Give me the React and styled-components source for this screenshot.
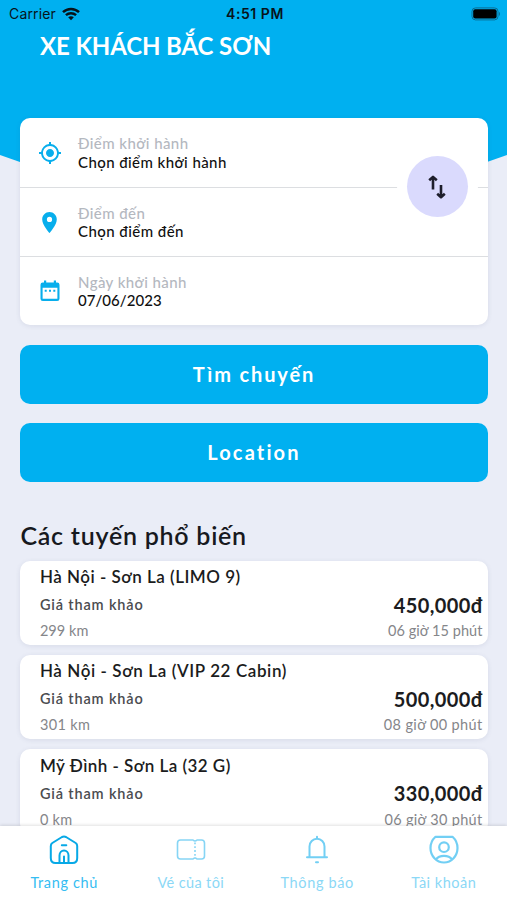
import React from "react";
import styled, { createGlobalStyle } from "styled-components";
import { MdLocationOn, MdMyLocation } from "react-icons/md";

const ROUTES = [
  {
    id: 1,
    name: "Hà Nội - Sơn La (LIMO 9)",
    price: "450,000đ",
    distance: "299 km",
    duration: "06 giờ 15 phút",
    spacing: 0.5,
    detailSpacing: 0.05,
  },
  {
    id: 2,
    name: "Hà Nội - Sơn La (VIP 22 Cabin)",
    price: "500,000đ",
    distance: "301 km",
    duration: "08 giờ 00 phút",
    spacing: 0.6,
    detailSpacing: 0.35,
  },
  {
    id: 3,
    name: "Mỹ Đình - Sơn La (32 G)",
    price: "330,000đ",
    distance: "0 km",
    duration: "06 giờ 30 phút",
    spacing: 0.47,
    detailSpacing: 0.3,
  },
];

const WifiIcon = () => (
  <svg width="18" height="14" viewBox="0 0 18 14" fill="none" stroke="#07141b">
    <path d="M1 5.2C5.5.9 12.5.9 17 5.2" strokeWidth="2.5" />
    <path d="M3.9 8.2C6.8 5.5 11.2 5.5 14.1 8.2" strokeWidth="2.4" />
    <path d="M6.2 10.3C7.8 8.9 10.2 8.9 11.8 10.3L9 13.2Z" fill="#07141b" stroke="none" />
  </svg>
);

const BatteryIcon = () => (
  <svg width="30" height="14" viewBox="0 0 30 14">
    <rect x="1" y="0.9" width="26" height="12" rx="3.5" fill="none" stroke="#0a6d94" />
    <rect x="2.2" y="2.2" width="23.4" height="9.4" rx="2" fill="#000" />
    <path d="M28 4.8Q30 7 28 9.2Z" fill="#0a6d94" />
  </svg>
);

const CalendarIcon = () => (
  <svg width="20" height="22" viewBox="0 0 20 22">
    <path
      fill="#08aeec"
      fillRule="evenodd"
      d="M4 .5h2.2v2h7.6v-2H16v2h1.2Q19.500 2.500 19.500 4.800v14Q19.500 21 17.200 21H2.800Q.5 21 .5 18.800v-14Q.5 2.500 2.800 2.500H4ZM2.600 7.800v11h14.800v-11Z"
    />
    <path fill="#08aeec" d="M4.700 9.800h2v2h-2ZM9 9.800h2v2H9ZM13.300 9.800h2v2h-2Z" />
  </svg>
);

const SwapIcon = () => (
  <svg width="18" height="24" viewBox="0 0 18 24" fill="none" stroke="#1d1d2b" strokeWidth="2.6" strokeLinejoin="round">
    <path d="M5 14.5V3M1.2 5.3L5 1.9L8.8 5.3" />
    <path d="M13 10v11M9.2 18.8L13 22.2L16.8 18.8" />
  </svg>
);

const HomeIcon = () => (
  <svg width="30" height="30" viewBox="0 0 30 30" fill="none" stroke="#08a9e6" strokeWidth="2" strokeLinecap="round" strokeLinejoin="round">
    <path d="M3.3 8L13 2Q15 1 17 2L26.7 8Q28.2 9 28.2 11V23Q28.2 28 23.5 28H6.5Q1.8 28 1.8 23V11Q1.8 9 3.3 8Z" />
    <path d="M10.5 27.5V20.5A4.5 5 0 0 1 19.5 20.5V27.5M15 27.5V21.5M12.8 10.3h4.5" />
  </svg>
);

const TicketIcon = () => (
  <svg width="30" height="30" viewBox="0 0 30 30" fill="none" stroke="#86d5f5" strokeWidth="1.6" strokeLinejoin="round">
    <path d="M4.5 5H17Q19 7 21 5H25.5Q28.5 5 28.5 8V21Q28.5 24 25.5 24H21Q19 22 17 24H4.5Q1.5 24 1.5 21V8Q1.5 5 4.5 5Z" />
    <path d="M19 7.5V23" strokeDasharray="1.8 2" />
  </svg>
);

const BellIcon = () => (
  <svg width="30" height="30" viewBox="0 0 30 30" fill="none" stroke="#72cff4" strokeWidth="2" strokeLinecap="round">
    <path d="M15 1.8V3.8M7.5 22V11.5A7.5 7.7 0 0 1 22.5 11.5V22M5 22.2H25M14 27.3H16" />
  </svg>
);

const AccountIcon = () => (
  <svg width="30" height="30" viewBox="0 0 30 30" fill="none" stroke="#72cff4" strokeWidth="2.2" strokeLinejoin="round">
    <path d="M6.5 1.8H23.5C26.5 4.5 28.5 8.5 28.5 13C28.5 21 22.5 27.5 15 27.5S1.5 21 1.5 13C1.5 8.5 3.5 4.5 6.5 1.8Z" />
    <circle cx="15" cy="12.2" r="4.8" />
    <path d="M7 24.3Q9.5 20.8 15 20.8T23 24.3" />
  </svg>
);

const FIELDS = [
  {
    id: "from",
    label: "Điểm khởi hành",
    value: "Chọn điểm khởi hành",
    icon: <MdMyLocation size={24} />,
    spacing: 0.42,
  },
  {
    id: "to",
    label: "Điểm đến",
    value: "Chọn điểm đến",
    icon: <MdLocationOn size={25} />,
    spacing: 0.45,
  },
  {
    id: "date",
    label: "Ngày khởi hành",
    value: "07/06/2023",
    icon: <CalendarIcon />,
    spacing: 0.05,
  },
];

const TABS = [
  { id: "home", label: "Trang chủ", icon: HomeIcon, spacing: 0.65 },
  { id: "tickets", label: "Vé của tôi", icon: TicketIcon, spacing: 0.38 },
  { id: "alerts", label: "Thông báo", icon: BellIcon, spacing: 0.65 },
  { id: "account", label: "Tài khoản", icon: AccountIcon, spacing: 0.5 },
];

const App = () => {
  return (
    <Screen>
      <GlobalStyle />
      <Content>
        <Header>
          <StatusBar>
            <Carrier>
              Carrier <WifiIcon />
            </Carrier>
            <Clock>4:51 PM</Clock>
            <Battery>
              <BatteryIcon />
            </Battery>
          </StatusBar>
          <Brand>XE KHÁCH BẮC SƠN</Brand>
        </Header>
        <Main>
          <SearchCard>
            {FIELDS.map((field) => {
              return (
                <Field key={field.id}>
                  <FieldIcon>{field.icon}</FieldIcon>
                  <div>
                    <FieldLabel>{field.label}</FieldLabel>
                    <FieldValue $spacing={field.spacing}>
                      {field.value}
                    </FieldValue>
                  </div>
                </Field>
              );
            })}
            <SwapButton>
              <SwapIcon />
            </SwapButton>
          </SearchCard>
          <Button $spacing={1.85}>Tìm chuyến</Button>
          <Button $spacing={2.15}>Location</Button>
          <SectionTitle>Các tuyến phổ biến</SectionTitle>
          {ROUTES.map((route) => {
            return (
              <RouteCard key={route.id}>
                <RouteName $spacing={route.spacing}>{route.name}</RouteName>
                <RouteRow $height={30}>
                  <PriceLabel>Giá tham khảo</PriceLabel>
                  <Price>{route.price}</Price>
                </RouteRow>
                <RouteRow $height={22}>
                  <Detail $spacing={route.detailSpacing}>
                    {route.distance}
                  </Detail>
                  <Detail $spacing={route.detailSpacing}>
                    {route.duration}
                  </Detail>
                </RouteRow>
              </RouteCard>
            );
          })}
        </Main>
      </Content>
      <TabBar>
        {TABS.map(({ id, label, icon: Icon, spacing }) => {
          return (
            <Tab key={id} $active={id === "home"} $spacing={spacing}>
              <Icon />
              <span>{label}</span>
            </Tab>
          );
        })}
      </TabBar>
    </Screen>
  );
};

const GlobalStyle = createGlobalStyle`
  * {
    box-sizing: border-box;
  }
  body {
    margin: 0;
    font-family: Lato, "Noto Sans", sans-serif;
  }
`;

const Screen = styled.div`
  display: flex;
  flex-direction: column;
  height: 900px;
  overflow: hidden;
  background: #eaedf7;
`;

const Content = styled.div`
  flex: 1;
  min-height: 0;
  overflow: hidden;
`;

const Header = styled.header`
  height: 200px;
  background: #00b0f0;
  clip-path: circle(735px at 50% -535px);
`;

const StatusBar = styled.div`
  display: grid;
  grid-template-columns: 1fr auto 1fr;
  align-items: center;
  height: 27px;
  padding: 0 6px 0 9px;
  color: #07141b;
  font-family: Inter, sans-serif;
  font-size: 14px;
`;

const Carrier = styled.div`
  display: flex;
  align-items: center;
  gap: 6px;
  letter-spacing: 0.15px;
`;

const Clock = styled.div`
  font-weight: 600;
  letter-spacing: 0.55px;
`;

const Battery = styled.div`
  display: flex;
  justify-content: flex-end;
`;

const Brand = styled.h1`
  margin: 4px 0 0 40px;
  color: #fff;
  font-size: 24px;
  font-weight: 700;
  line-height: 30px;
  letter-spacing: -0.1px;
`;

const Main = styled.main`
  margin-top: -82px;
  padding: 0 19.5px 0 20.4px;
`;

const SearchCard = styled.section`
  position: relative;
  margin-bottom: 20px;
  border-radius: 10px;
  background: #fff;
  box-shadow: 0 1px 5px rgba(60, 70, 110, 0.1);
`;

const Field = styled.div`
  display: flex;
  align-items: center;
  height: 69px;

  & + & {
    border-top: 1px solid #dcdee1;
  }
`;

const FieldIcon = styled.div`
  display: flex;
  justify-content: center;
  width: 57.6px;
  padding-left: 1px;
  color: #08aeec;
`;

const FieldLabel = styled.div`
  color: #b4b8bf;
  font-size: 15px;
  font-weight: 500;
  line-height: 18.5px;
  letter-spacing: 0.42px;
`;

const FieldValue = styled.div`
  color: #111;
  font-size: 15px;
  font-weight: 500;
  line-height: 18.5px;
  letter-spacing: ${(props) => props.$spacing}px;
`;

/* the white ring cuts the divider behind the button */
const SwapButton = styled.button`
  position: absolute;
  top: 38px;
  right: 20px;
  display: flex;
  align-items: center;
  justify-content: center;
  width: 61px;
  height: 61px;
  padding: 0;
  border: 0;
  border-radius: 50%;
  background: #dadafd;
  box-shadow: 0 0 0 10px #fff;
`;

const Button = styled.button`
  display: block;
  width: 100%;
  height: 58.5px;
  margin: 0 0 19.5px;
  border: 0;
  border-radius: 10px;
  background: #00b0f0;
  color: #fff;
  font-family: inherit;
  font-size: 20px;
  font-weight: 700;
  letter-spacing: ${(props) => props.$spacing}px;
`;

const SectionTitle = styled.h2`
  margin: 38.5px 0 10.6px;
  color: #17191e;
  font-size: 25px;
  font-weight: 600;
  line-height: 30px;
  letter-spacing: 0.75px;
`;

const RouteCard = styled.article`
  height: 84.5px;
  margin-bottom: 9.7px;
  padding: 3.6px 5px 0 19.5px;
  border-radius: 10px;
  background: #fff;
  box-shadow: 0 1px 5px rgba(60, 70, 110, 0.1);
`;

const RouteName = styled.h3`
  margin: 0;
  color: #1b1c20;
  font-size: 17px;
  font-weight: 600;
  line-height: 25.5px;
  letter-spacing: ${(props) => props.$spacing}px;
`;

const RouteRow = styled.div`
  display: flex;
  align-items: center;
  justify-content: space-between;
  height: ${(props) => props.$height}px;
`;

const PriceLabel = styled.span`
  color: #4b4c50;
  font-size: 14.5px;
  font-weight: 600;
  letter-spacing: 0.85px;
`;

const Price = styled.span`
  color: #1b1c20;
  font-size: 20px;
  font-weight: 700;
  letter-spacing: 0.4px;
`;

const Detail = styled.span`
  color: #85868a;
  font-size: 14.5px;
  letter-spacing: ${(props) => props.$spacing}px;
`;

const TabBar = styled.nav`
  position: relative;
  display: grid;
  grid-template-columns: repeat(4, 1fr);
  height: 74px;
  padding-left: 1px;
  background: #fff;
  box-shadow: 0 -1px 3px rgba(0, 0, 0, 0.12);
`;

const Tab = styled.div`
  display: flex;
  flex-direction: column;
  align-items: center;
  gap: 8px;
  padding-top: 9px;
  color: ${(props) => (props.$active ? "#35bdf2" : "#8bd8f6")};
  font-size: 14.5px;
  line-height: 20px;
  letter-spacing: ${(props) => props.$spacing}px;
`;

export default App;
